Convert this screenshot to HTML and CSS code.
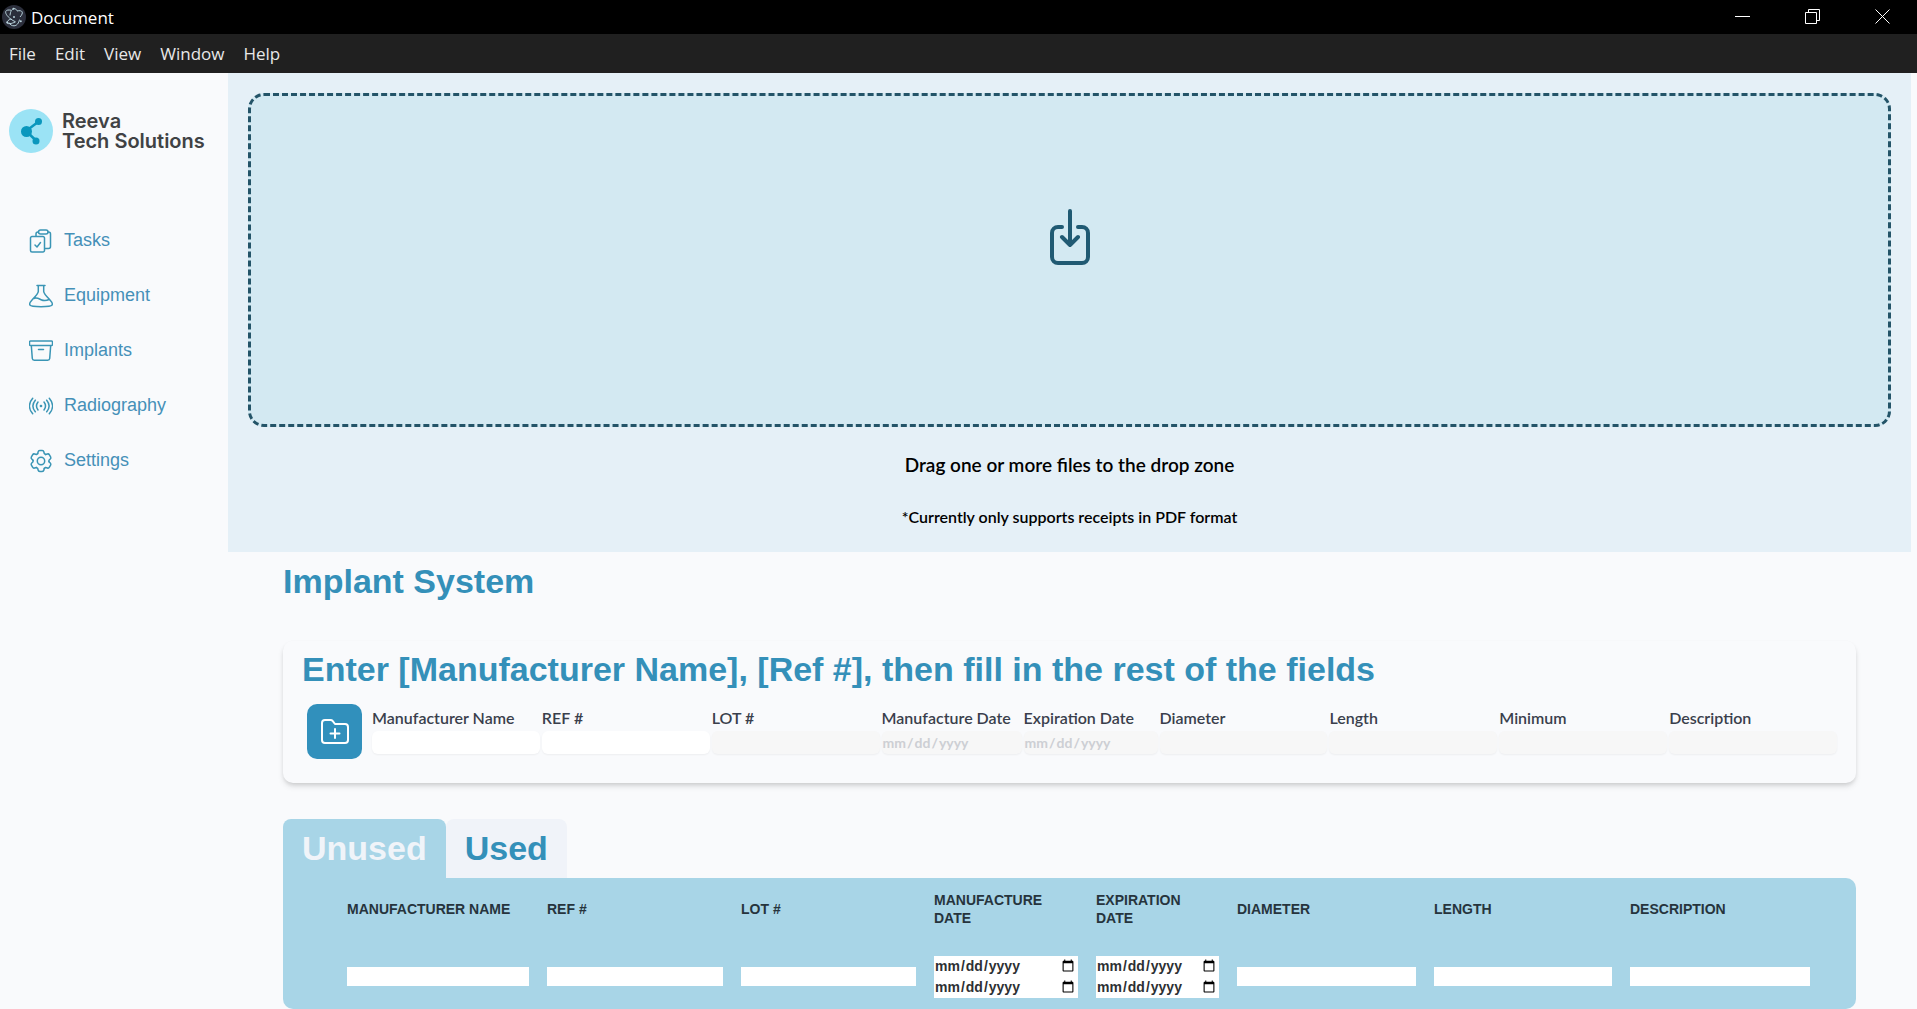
FILE: index.html
```html
<!DOCTYPE html>
<html lang="en">
<head>
<meta charset="utf-8">
<title>Document</title>
<link rel="stylesheet" href="styles.css">
</head>
<body>
<header class="titlebar">
  <svg class="app-icon" viewBox="0 0 24 24" aria-hidden="true">
    <circle cx="12" cy="12" r="12" fill="#2b2e3b"/>
    <g fill="none" stroke="#b9d3dc" stroke-width="1">
      <path d="M9 5.200c-2.600-.5-4.500-.1-5.100 1-1 1.700 1.100 5 4.700 7.700 1.500 1.200 3.200 2.200 4.900 2.900"/>
      <path d="M15 6c2.700-.6 4.500-.3 5.100.8.700 1.200-.2 3.200-2.100 5.200M7 17.500c1 2.200 2.800 3.300 5 3.300 2.600 0 4.800-2.500 5.500-6.200"/>
      <path d="M9.200 13.800c-3 1.200-4.600 2.800-4.100 4 .7 1.500 4.300 1 8.200-.8M8 10.500C8.300 6.500 10 3.600 12.200 3.600c1.200 0 2.200.8 3 2.300"/>
    </g>
    <circle cx="12" cy="12" r="1" fill="#b9d3dc"/>
    <circle cx="18.800" cy="16.200" r="1" fill="#b9d3dc"/>
    <circle cx="5.300" cy="17.600" r="1" fill="#b9d3dc"/>
    <circle cx="11.500" cy="3.800" r="1" fill="#b9d3dc"/>
  </svg>
  <span class="window-title">Document</span>
  <div class="window-controls">
    <button type="button" aria-label="Minimize"><svg viewBox="0 0 16 16"><path d="M0 7.500h15"/></svg></button>
    <button type="button" aria-label="Restore"><svg viewBox="0 0 16 16"><path d="M.5 3.500h11v11H.5zM3.500 3.500v-3h11v11h-3"/></svg></button>
    <button type="button" aria-label="Close"><svg viewBox="0 0 16 16"><path d="M.5.5l14 14M14.500.5l-14 14"/></svg></button>
  </div>
</header>
<nav class="menubar" aria-label="Application menu">
  <button type="button">File</button>
  <button type="button">Edit</button>
  <button type="button">View</button>
  <button type="button">Window</button>
  <button type="button">Help</button>
</nav>

<div class="app">
  <aside class="sidebar">
    <div class="brand">
      <svg class="brand-mark" viewBox="0 0 44 44" aria-hidden="true">
        <circle cx="22" cy="22" r="22" fill="#9be3f5"/>
        <path d="M29 13L17 22l10 9.500" fill="none" stroke="#0a97bd" stroke-width="2.500"/>
        <g fill="#0a97bd"><circle cx="17.500" cy="22.500" r="5.500"/><circle cx="29.500" cy="12.500" r="3.500"/><circle cx="27" cy="32" r="3.500"/></g>
      </svg>
      <div class="brand-name"><div>Reeva</div><div>Tech Solutions</div></div>
    </div>
    <nav class="side-nav" aria-label="Sections">
      <a href="#tasks"><svg viewBox="0 0 24 24"><path d="M3 7.500h11a1.500 1.500 0 0 1 1.500 1.500v12.500a1.500 1.500 0 0 1-1.500 1.500H3a1.500 1.500 0 0 1-1.500-1.500V9A1.500 1.500 0 0 1 3 7.500zM6 16l2 2 3.500-4.500M7 7.500V5a2 2 0 0 1 2-2h.5M19 3h.5a2 2 0 0 1 2 2v12.500a2 2 0 0 1-2 2h-4"/><rect x="9.500" y="1" width="9.500" height="4" rx="2"/></svg>Tasks</a>
      <a href="#equipment"><svg viewBox="0 0 24 24"><path d="M8 1.500h8M9.300 1.500v6c0 2-2.300 4.300-6.300 8.500C.7 18.500.2 20 1 21.200c.8 1.300 4 1.500 11 1.500s10.200-.2 11-1.500c.8-1.200.3-2.700-2-5.200-4-4.200-6.300-6.500-6.300-8.500v-6M4.800 14.500c3-1.200 5 .2 7.200 1.200 2.500 1.100 5 1.300 8-.2"/></svg>Equipment</a>
      <a href="#implants"><svg viewBox="0 0 24 24"><path d="M1.500 2h21a1 1 0 0 1 1 1v2.500a1 1 0 0 1-1 1h-21a1 1 0 0 1-1-1V3a1 1 0 0 1 1-1zM2.300 6.500l1 13a2 2 0 0 0 2 1.800h13.400a2 2 0 0 0 2-1.800l1-13M9.500 10.500h5"/></svg>Implants</a>
      <a href="#radiography"><svg viewBox="0 0 24 24"><path d="M3.700 4.200c-4.200 4.800-4.200 10.800 0 15.600M20.300 4.200c4.200 4.800 4.200 10.800 0 15.600M6.300 6.200c-3 3.600-3 8 0 11.600M17.700 6.200c3 3.600 3 8 0 11.600M9 8c-1.900 2.500-1.900 5.500 0 8M15 8c1.900 2.500 1.900 5.500 0 8"/><circle cx="12" cy="12" r=".6"/></svg>Radiography</a>
      <a href="#settings"><svg viewBox="0 0 24 24"><circle cx="12" cy="12" r="3.700"/>
        <path d="M8.700 4.700L9.100 3Q9.400 1.600 10.800 1.600h2.400Q14.600 1.600 14.900 3l.4 1.700 1.400.8"/>
        <path transform="rotate(60 12 12)" d="M8.700 4.700L9.100 3Q9.400 1.600 10.800 1.600h2.400Q14.600 1.600 14.900 3l.4 1.700 1.400.8"/>
        <path transform="rotate(120 12 12)" d="M8.700 4.700L9.100 3Q9.400 1.600 10.800 1.600h2.400Q14.600 1.600 14.900 3l.4 1.700 1.400.8"/>
        <path transform="rotate(180 12 12)" d="M8.700 4.700L9.100 3Q9.400 1.600 10.800 1.600h2.400Q14.600 1.600 14.900 3l.4 1.700 1.400.8"/>
        <path transform="rotate(240 12 12)" d="M8.700 4.700L9.100 3Q9.400 1.600 10.800 1.600h2.400Q14.600 1.600 14.900 3l.4 1.700 1.400.8"/>
        <path transform="rotate(300 12 12)" d="M8.700 4.700L9.100 3Q9.400 1.600 10.800 1.600h2.400Q14.600 1.600 14.900 3l.4 1.700 1.400.8"/></svg>Settings</a>
    </nav>
  </aside>

  <main class="main">
    <section class="upload">
      <div class="dropzone">
        <svg class="drop-icon" viewBox="0 0 40 56" aria-hidden="true"><path d="M12 18H8a6 6 0 0 0-6 6v24a6 6 0 0 0 6 6h24a6 6 0 0 0 6-6V24a6 6 0 0 0-6-6h-4M20 2v34M12 28l8 8 8-8"/></svg>
      </div>
      <p class="drop-title">Drag one or more files to the drop zone</p>
      <p class="drop-note">*Currently only supports receipts in PDF format</p>
    </section>

    <div class="content">
      <h1>Implant System</h1>

      <form class="entry-card">
        <h2>Enter [Manufacturer Name], [Ref #], then fill in the rest of the fields</h2>
        <div class="entry-row">
          <button type="button" class="add-button" aria-label="Add implant">
            <svg viewBox="0 0 28 28"><path d="M1 22V5a3 3 0 0 1 3-3h5.500a3 3 0 0 1 2.300 1.100L14 6h10a3 3 0 0 1 3 3v13a3 3 0 0 1-3 3H4a3 3 0 0 1-3-3zM14 11v9M9.500 15.500h9"/></svg>
          </button>
          <div class="fields">
            <label class="field">Manufacturer Name<input type="text"></label>
            <label class="field">REF #<input type="text"></label>
            <label class="field">LOT #<input type="text" disabled></label>
            <label class="field">Manufacture Date<input type="date" disabled></label>
            <label class="field">Expiration Date<input type="date" disabled></label>
            <label class="field">Diameter<input type="text" disabled></label>
            <label class="field">Length<input type="text" disabled></label>
            <label class="field">Minimum<input type="text" disabled></label>
            <label class="field">Description<input type="text" disabled></label>
          </div>
        </div>
      </form>

      <div class="tabs" role="tablist">
        <button type="button" class="tab active" role="tab" aria-selected="true">Unused</button>
        <button type="button" class="tab" role="tab" aria-selected="false">Used</button>
      </div>
      <div class="panel" role="tabpanel">
        <table class="stock">
          <colgroup>
            <col class="c-lead"><col class="c-name"><col class="c-ref"><col class="c-lot"><col class="c-made"><col class="c-exp"><col class="c-dia"><col class="c-len"><col class="c-desc"><col class="c-tail">
          </colgroup>
          <thead>
            <tr><td></td><th>MANUFACTURER NAME</th><th>REF #</th><th>LOT #</th><th>MANUFACTURE DATE</th><th>EXPIRATION DATE</th><th>DIAMETER</th><th>LENGTH</th><th>DESCRIPTION</th><td></td></tr>
          </thead>
          <tbody>
            <tr>
              <td></td>
              <td><input type="text" aria-label="Filter manufacturer name"></td>
              <td><input type="text" aria-label="Filter REF #"></td>
              <td><input type="text" aria-label="Filter LOT #"></td>
              <td><input type="date" aria-label="Manufactured from"><input type="date" aria-label="Manufactured to"></td>
              <td><input type="date" aria-label="Expires from"><input type="date" aria-label="Expires to"></td>
              <td><input type="text" aria-label="Filter diameter"></td>
              <td><input type="text" aria-label="Filter length"></td>
              <td><input type="text" aria-label="Filter description"></td>
              <td></td>
            </tr>
          </tbody>
        </table>
      </div>
    </div>
  </main>
</div>
</body>
</html>
```
FILE: styles.css
```css
* { box-sizing: border-box; }

body {
  margin: 0;
  background: #f9fafc;
  font-family: "Liberation Sans", Arial, sans-serif;
  color: #2d3748;
}

button { border: 0; margin: 0; padding: 0; background: none; font: inherit; color: inherit; }
svg { display: block; }

/* Window chrome */
.titlebar {
  display: flex;
  align-items: center;
  gap: 5px;
  height: 34px;
  padding-left: 2px;
  background: #000;
  color: #fff;
  font: 17px "Open Sans", "Noto Sans", sans-serif;
}
.app-icon { width: 24px; height: 24px; }
.window-controls { display: flex; margin-left: auto; }
.window-controls button { display: grid; place-items: center; width: 70px; height: 34px; padding-left: 2px; }
.window-controls svg { width: 16px; height: 16px; fill: none; stroke: #fff; stroke-width: 1; }

.menubar {
  display: flex;
  align-items: center;
  gap: 19px;
  height: 39px;
  padding-left: 9px;
  background: #202020;
  color: #e8e8e8;
  font: 17px "Open Sans", "Noto Sans", sans-serif;
}

.app { display: flex; }

/* Sidebar */
.sidebar { flex: 0 0 228px; padding-top: 36px; }
.brand { display: flex; align-items: center; gap: 9px; padding-left: 9px; }
.brand-mark { width: 44px; height: 44px; }
.brand-name { font: 600 20px/20px Inter, sans-serif; color: #404244; white-space: nowrap; }

.side-nav { display: flex; flex-direction: column; margin-top: 60px; padding-left: 29px; }
.side-nav a {
  display: flex;
  align-items: center;
  gap: 11px;
  height: 55px;
  font-size: 18px;
  color: #4590b8;
  text-decoration: none;
}
.side-nav svg { width: 24px; height: 24px; fill: none; stroke: #3a95b5; stroke-width: 1.5; stroke-linecap: round; stroke-linejoin: round; }

/* Upload area */
.main { flex: 1; min-width: 0; padding-right: 6px; }
.upload {
  height: 479px;
  padding: 20px;
  background: #e5f0f7;
  color: #000;
  font-family: Lato, sans-serif;
  font-weight: 600;
  text-align: center;
}
.dropzone {
  display: flex;
  justify-content: center;
  height: 334px;
  padding-top: 113px;
  border: 3px dashed #235468;
  border-radius: 16px;
  background: #d3e9f2;
}
.drop-icon { width: 40px; height: 56px; fill: none; stroke: #205a73; stroke-width: 4; stroke-linecap: round; stroke-linejoin: round; }
.drop-title { margin: 26px 0 0; font-size: 19px; line-height: 24px; }
.drop-note { margin: 28px 0 0; font-size: 16px; line-height: 24px; }

/* Content */
.content { padding: 9px 55px 0; }
h1, h2 { margin: 0; font-size: 34px; line-height: 40px; color: #3490b9; }

.entry-card {
  margin-top: 40px;
  padding: 8px 19px 24px;
  border-radius: 10px;
  box-shadow: 0 4px 6px -1px rgba(0, 0, 0, .13), 0 2px 4px -1px rgba(0, 0, 0, .1);
}
.entry-row { display: flex; gap: 10px; margin-top: 15px; padding-left: 5px; }
.add-button { display: grid; place-items: center; width: 55px; height: 55px; border-radius: 10px; background: #3190bc; }
.add-button svg { width: 28px; height: 28px; fill: none; stroke: #fff; stroke-width: 2; stroke-linecap: round; stroke-linejoin: round; }
.fields {
  flex: 1;
  display: grid;
  grid-template-columns: repeat(3, 1fr) 140px 134px repeat(4, 1fr);
  gap: 2px;
  padding-top: 2px;
}
.field {
  display: flex;
  flex-direction: column;
  gap: 1px;
  min-width: 0;
  font: 600 16px/24px Lato, sans-serif;
  color: #3a3f4c;
  white-space: nowrap;
}
.field input {
  width: 100%;
  height: 23px;
  padding: 0;
  border: 0;
  border-radius: 6px;
  background: #fff;
  box-shadow: 0 1px 2px rgba(0, 0, 0, .05);
  font: bold 14px Lato, sans-serif;
  color: #2d3748;
}
.field input:disabled { background: #f7f7f7; color: #cdcfd4; }
.field input[type="date"]::-webkit-calendar-picker-indicator { display: none; }

/* Tabs */
.tabs { display: flex; margin-top: 36px; }
.tab {
  height: 59px;
  padding: 0 19px;
  border-radius: 8px 8px 0 0;
  background: #f0f3f9;
  color: #3490b9;
  font-size: 34px;
  font-weight: bold;
}
.tab.active { background: #a8d5e7; color: #f0f4f9; }

.panel { border-radius: 0 10px 10px 10px; background: #a8d5e7; }
.stock { width: 100%; table-layout: fixed; border-collapse: collapse; }
.stock th { height: 62px; padding: 0 9px; font-size: 14px; line-height: 18px; text-align: left; color: #26343d; }
.stock td { padding: 0 9px; }
.stock tbody td { height: 69px; padding-top: 4px; }
.stock input {
  display: block;
  width: 100%;
  height: 19px;
  padding: 0 1px;
  border: 0;
  border-radius: 0;
  background: #fff;
  font: bold 14px "Liberation Sans", Arial, sans-serif;
  color: #2d3033;
}
.stock input[type="date"] { height: 21px; padding: 0 1px 0 0; }
.c-lead { width: 55px; }
.c-name { width: 200px; }
.c-ref { width: 194px; }
.c-lot { width: 193px; }
.c-made { width: 162px; }
.c-exp { width: 141px; }
.c-dia { width: 197px; }
.c-len { width: 196px; }
.c-desc { width: 198px; }
.c-tail { width: 37px; }
```
